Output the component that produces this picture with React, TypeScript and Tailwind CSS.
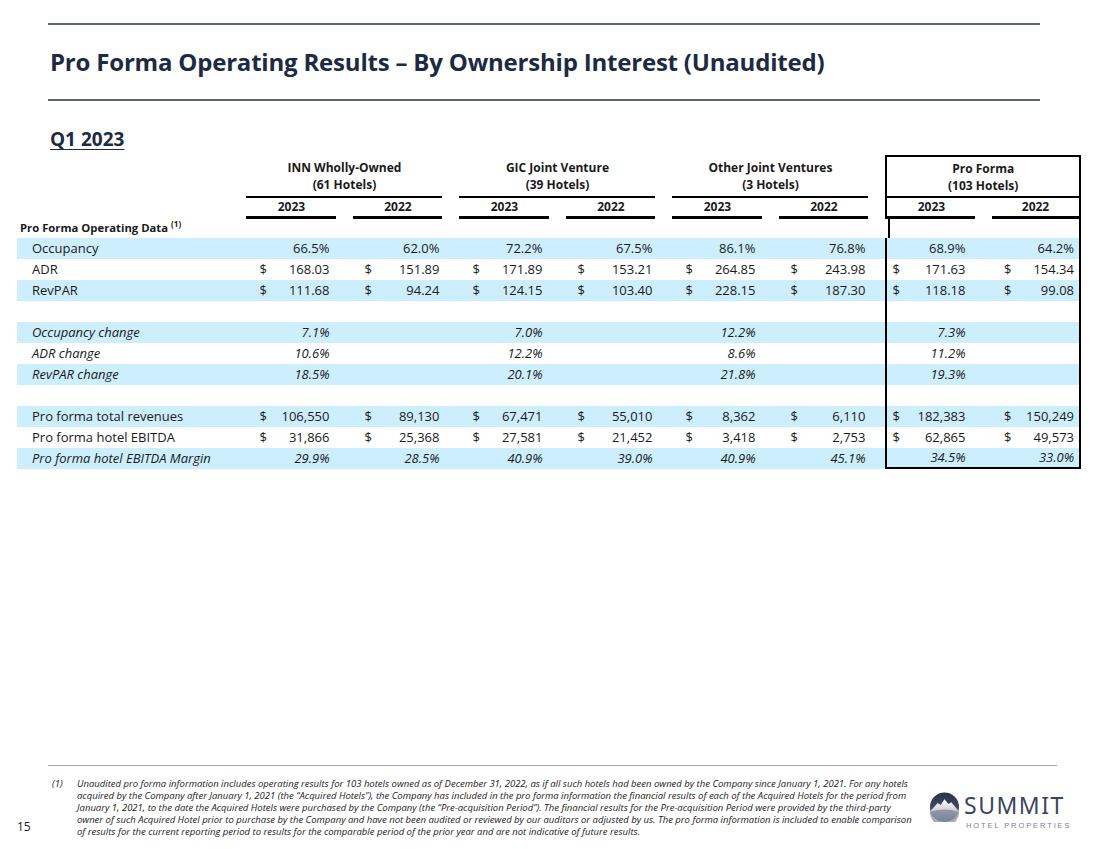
const font = { fontFamily: '"Open Sans", "Noto Sans", sans-serif' };

type Row = {
  label: string;
  blue: boolean;
  italic?: boolean;
  labelItalic?: boolean;
  dollar?: boolean;
  vals?: string[];
};

const rows: Row[] = [
  { label: 'Occupancy', blue: true, vals: ['66.5%', '62.0%', '72.2%', '67.5%', '86.1%', '76.8%', '68.9%', '64.2%'] },
  { label: 'ADR', blue: false, dollar: true, vals: ['168.03', '151.89', '171.89', '153.21', '264.85', '243.98', '171.63', '154.34'] },
  { label: 'RevPAR', blue: true, dollar: true, vals: ['111.68', '94.24', '124.15', '103.40', '228.15', '187.30', '118.18', '99.08'] },
  { label: '', blue: false },
  { label: 'Occupancy change', blue: true, italic: true, labelItalic: true, vals: ['7.1%', '', '7.0%', '', '12.2%', '', '7.3%', ''] },
  { label: 'ADR change', blue: false, italic: true, labelItalic: true, vals: ['10.6%', '', '12.2%', '', '8.6%', '', '11.2%', ''] },
  { label: 'RevPAR change', blue: true, italic: true, labelItalic: true, vals: ['18.5%', '', '20.1%', '', '21.8%', '', '19.3%', ''] },
  { label: '', blue: false },
  { label: 'Pro forma total revenues', blue: true, dollar: true, vals: ['106,550', '89,130', '67,471', '55,010', '8,362', '6,110', '182,383', '150,249'] },
  { label: 'Pro forma hotel EBITDA', blue: false, dollar: true, vals: ['31,866', '25,368', '27,581', '21,452', '3,418', '2,753', '62,865', '49,573'] },
  { label: 'Pro forma hotel EBITDA Margin', blue: true, italic: true, labelItalic: true, vals: ['29.9%', '28.5%', '40.9%', '39.0%', '40.9%', '45.1%', '34.5%', '33.0%'] },
];

const groups = [
  { name: 'INN Wholly-Owned', count: '(61 Hotels)' },
  { name: 'GIC Joint Venture', count: '(39 Hotels)' },
  { name: 'Other Joint Ventures', count: '(3 Hotels)' },
  { name: 'Pro Forma', count: '(103 Hotels)' },
];

const footnote = [
  'Unaudited pro forma information includes operating results for 103 hotels owned as of December 31, 2022, as if all such hotels had been owned by the Company since January 1, 2021. For any hotels',
  'acquired by the Company after January 1, 2021 (the “Acquired Hotels”), the Company has included in the pro forma information the financial results of each of the Acquired Hotels for the period from',
  'January 1, 2021, to the date the Acquired Hotels were purchased by the Company (the “Pre-acquisition Period”). The financial results for the Pre-acquisition Period were provided by the third-party',
  'owner of such Acquired Hotel prior to purchase by the Company and have not been audited or reviewed by our auditors or adjusted by us. The pro forma information is included to enable comparison',
  'of results for the current reporting period to results for the comparable period of the prior year and are not indicative of future results.',
];

const Cell = ({
  value,
  dollar,
  italic,
  first,
  pf,
}: {
  value: string;
  dollar?: boolean;
  italic?: boolean;
  first: boolean;
  pf: boolean;
}) => {
  let cls = '';
  if (pf) cls = first ? 'w-[88px] pl-[5px] pr-[10px]' : 'w-[88px] pl-[13px] pr-[5px]';
  else cls = first ? 'w-[90px] pl-[13px] pr-[7px]' : 'w-[89px] pl-[11px] pr-[3px]';
  return (
    <div className={`flex justify-between items-center ${cls} ${italic ? 'italic' : ''}`}>
      <span>{dollar && value ? '$' : ''}</span>
      <span>{value}</span>
    </div>
  );
};

const Logo = () => (
  <div className="flex items-start gap-[3px]">
    <svg width="33" height="30" viewBox="0 0 34 30" className="mt-[2px]">
      <defs>
        <linearGradient id="lg1" x1="0" y1="0" x2="0" y2="1">
          <stop offset="0" stopColor="#27324b" />
          <stop offset="1" stopColor="#56617a" />
        </linearGradient>
        <linearGradient id="lg2" x1="0" y1="0" x2="0" y2="1">
          <stop offset="0" stopColor="#ffffff" />
          <stop offset="1" stopColor="#9aa2b3" />
        </linearGradient>
      </defs>
      <circle cx="17" cy="15" r="15" fill="url(#lg1)" />
      <path d="M2.5 19 L10 11 L13 13 L17 7 L21 12 L24 10 L31.5 19 A15 15 0 0 1 2.5 19 Z" fill="url(#lg2)" />
      <path d="M2 20 Q17 15 32 20 A15 15 0 0 1 2 20 Z" fill="#5d6881" opacity="0.55" />
    </svg>
    <div className="flex flex-col">
      <span
        className="text-[23px] leading-[31px] tracking-[1.5px] text-[#3a4660]"
        style={{ fontFamily: '"Noto Sans", sans-serif' }}
      >
        SUMMIT
      </span>
      <span
        className="text-[7.5px] leading-[9px] tracking-[1.9px] text-[#7b8190] ml-[2px]"
        style={{ fontFamily: '"Liberation Sans", sans-serif' }}
      >
        HOTEL PROPERTIES
      </span>
    </div>
  </div>
);

export default function App() {
  return (
    <div className="w-[1100px] h-[849px] bg-white relative flex flex-col text-[#1a1a1a]" style={font}>
      <div className="ml-[48px] mt-[23px] w-[992px] h-[2px] bg-[#5e6472]" />
      <div className="h-[74px] flex items-center pl-[50px]">
        <h1 className="text-[24px] font-bold text-[#1c2a43] tracking-[-0.2px]">
          Pro Forma Operating Results – By Ownership Interest (Unaudited)
        </h1>
      </div>
      <div className="ml-[48px] w-[992px] h-[2px] bg-[#5e6472]" />
      <div className="h-[54px] flex items-end pl-[50px] pb-[4px]">
        <span className="text-[19px] font-bold text-[#1c2a43] underline underline-offset-[3px] leading-[24px]">
          Q1 2023
        </span>
      </div>

      <div className="ml-[17px] w-[1064px] text-[13px]">
        {/* group header */}
        <div className="flex">
          <div className="w-[230px]" />
          {groups.map((g, i) => {
            const pf = i === 3;
            return (
              <div
                key={g.name}
                className={`w-[196px] flex flex-col font-bold text-[12px] ${i > 0 ? 'ml-[17px]' : ''} ${
                  pf ? 'border-x-2 border-t-2 border-black' : ''
                }`}
              >
                <div
                  className={`flex flex-col items-center justify-center leading-[17px] border-b-2 border-black ${
                    pf ? 'h-[41px]' : 'h-[43px]'
                  }`}
                >
                  <span>{g.name}</span>
                  <span>{g.count}</span>
                </div>
                <div className={`flex ${pf ? 'justify-between' : ''}`}>
                  <div
                    className={`${pf ? 'w-[88px]' : 'w-[90px]'} h-[21px] border-b-[3px] border-black flex items-center justify-center`}
                  >
                    2023
                  </div>
                  <div
                    className={`${pf ? 'w-[87px]' : 'w-[89px] ml-[17px]'} h-[21px] border-b-[3px] border-black flex items-center justify-center`}
                  >
                    2022
                  </div>
                </div>
              </div>
            );
          })}
        </div>
        {/* section label */}
        <div className="flex h-[19px]">
          <div className="w-[869px] pl-[3px] flex items-center font-bold text-[11.3px]">
            Pro Forma Operating Data<sup className="text-[8px] ml-[3px] -top-[5px]">(1)</sup>
          </div>
          <div className="w-[196px] ml-[17px] border-x-2 border-black" />
        </div>
        {rows.map((r, ri) => (
          <div key={ri} className={`flex h-[21px] ${r.blue ? 'bg-[#cdeefc]' : ''}`}>
            <div className={`w-[230px] pl-[15px] flex items-center ${r.labelItalic ? 'italic' : ''}`}>{r.label}</div>
            {[0, 1, 2, 3].map((g) => {
              const pf = g === 3;
              return (
                <div
                  key={g}
                  className={`w-[196px] flex ${g > 0 ? 'ml-[17px]' : ''} ${pf ? 'border-x-2 border-black justify-between' : ''} ${
                    pf && ri === rows.length - 1 ? 'border-b-2' : ''
                  }`}
                >
                  {r.vals ? (
                    <>
                      <Cell value={r.vals[g * 2]} dollar={r.dollar} italic={r.italic} first pf={pf} />
                      {!pf && <div className="w-[17px]" />}
                      <Cell value={r.vals[g * 2 + 1]} dollar={r.dollar} italic={r.italic} first={false} pf={pf} />
                    </>
                  ) : null}
                </div>
              );
            })}
          </div>
        ))}
      </div>

      <div className="flex-1" />
      <div className="ml-[48px] w-[1009px] h-px bg-[#a3a7b0]" />
      <div className="flex items-start h-[83px]">
        <div className="w-[48px] pl-[17px] pt-[52px] text-[12px] text-[#1a1a1a]">15</div>
        <div className="flex pt-[12px] italic text-[9.5px] leading-[12px] text-[#222]">
          <span className="w-[29px] pl-[4px]">(1)</span>
          <div className="flex flex-col w-[830px]">
            {footnote.map((l) => (
              <span key={l} className="whitespace-nowrap">
                {l}
              </span>
            ))}
          </div>
        </div>
        <div className="ml-[21px] pt-[24px]">
          <Logo />
        </div>
      </div>
    </div>
  );
}
